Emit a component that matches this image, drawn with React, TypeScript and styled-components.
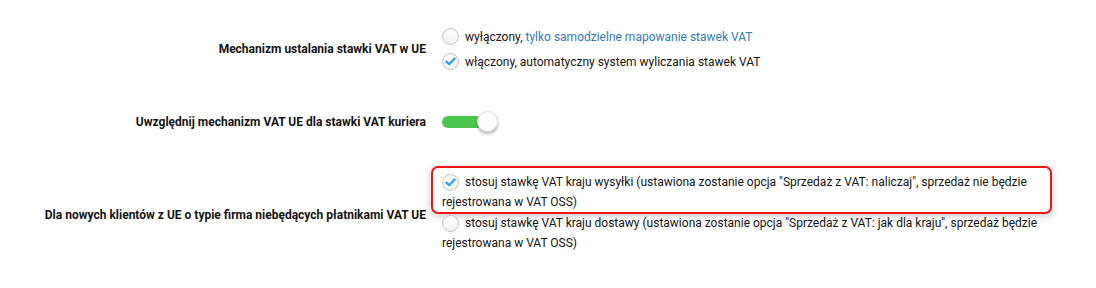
import React from "react";
import styled, { createGlobalStyle } from "styled-components";

const Global = createGlobalStyle`
  html, body { margin: 0; padding: 0; background: #fff; }
  body { font-family: Roboto, "Liberation Sans", Arial, sans-serif; font-size: 12px; color: #141414; }
`;

const Form = styled.div`
  width: 1096px;
  height: 288px;
  padding-top: 24px;
  box-sizing: border-box;
  display: flex;
  flex-direction: column;
`;

const Row = styled.div<{ $mt?: number }>`
  display: grid;
  grid-template-columns: 426px 610px;
  column-gap: 16px;
  align-items: center;
  margin-top: ${(p) => p.$mt ?? 0}px;
`;

const Label = styled.div<{ $pt?: number }>`
  text-align: right;
  font-weight: 700;
  line-height: 20px;
  padding-top: ${(p) => p.$pt ?? 0}px;
`;

const Options = styled.div`
  display: flex;
  flex-direction: column;
`;

const Option = styled.label<{ $pad?: number }>`
  display: block;
  line-height: 20px;
  padding: ${(p) => p.$pad ?? 0}px 0;
`;

const Highlight = styled.div`
  margin: 0 0 -1px -11px;
  border: 2px solid #f01414;
  border-radius: 7px;
  padding: 4px 0 0 9px;
  box-shadow: 0 2px 8px rgba(0, 0, 0, 0.22);
`;

const Radio = styled.span`
  display: inline-flex;
  align-items: center;
  justify-content: center;
  width: 17px;
  height: 17px;
  box-sizing: border-box;
  border: 1px solid #c4c4c4;
  border-radius: 50%;
  background: linear-gradient(#fff, #f1f1f1);
  box-shadow: inset 0 1px 2px rgba(0, 0, 0, 0.06);
  vertical-align: middle;
  margin: -4px 6px -3px 0;
`;

const Link = styled.a`
  color: #337ab7;
  text-decoration: none;
`;

const Toggle = styled.div`
  position: relative;
  width: 56px;
  height: 26px;
  display: flex;
  align-items: center;
`;

const Track = styled.div`
  width: 41px;
  height: 12px;
  border-radius: 6px;
  background: #4bc54b;
`;

const Knob = styled.div`
  position: absolute;
  left: 35px;
  top: 2px;
  width: 21px;
  height: 21px;
  box-sizing: border-box;
  border-radius: 50%;
  background: #fff;
  border: 1px solid #e0e0e0;
  box-shadow: 0 2px 3px rgba(0, 0, 0, 0.3);
`;

const Check = () => (
  <svg width="11" height="9" viewBox="0 0 11 9">
    <path d="M1.4 4.6 L4.2 7.2 L9.6 1.6" fill="none" stroke="#3a9ee0" strokeWidth="2.3" strokeLinecap="round" strokeLinejoin="round" />
  </svg>
);

const RadioIcon = ({ checked }: { checked?: boolean }) => <Radio>{checked && <Check />}</Radio>;

export default function App() {
  return (
    <>
      <Global />
      <Form>
        <Row>
          <Label>Mechanizm ustalania stawki VAT w UE</Label>
          <Options>
            <Option $pad={2.5}>
              <RadioIcon />
              wyłączony, <Link>tylko samodzielne mapowanie stawek VAT</Link>
            </Option>
            <Option $pad={2.5}>
              <RadioIcon checked />
              włączony, automatyczny system wyliczania stawek VAT
            </Option>
          </Options>
        </Row>
        <Row $mt={35}>
          <Label>Uwzględnij mechanizm VAT UE dla stawki VAT kuriera</Label>
          <Toggle>
            <Track />
            <Knob />
          </Toggle>
        </Row>
        <Row $mt={31}>
          <Label $pt={10}>Dla nowych klientów z UE o typie firma niebędących płatnikami VAT UE</Label>
          <Options>
            <Highlight>
              <Option>
                <RadioIcon checked />
                stosuj stawkę VAT kraju wysyłki (ustawiona zostanie opcja "Sprzedaż z VAT: naliczaj", sprzedaż nie będzie rejestrowana w VAT OSS)
              </Option>
            </Highlight>
            <Option>
              <RadioIcon />
              stosuj stawkę VAT kraju dostawy (ustawiona zostanie opcja "Sprzedaż z VAT: jak dla kraju", sprzedaż będzie rejestrowana w VAT OSS)
            </Option>
          </Options>
        </Row>
      </Form>
    </>
  );
}
